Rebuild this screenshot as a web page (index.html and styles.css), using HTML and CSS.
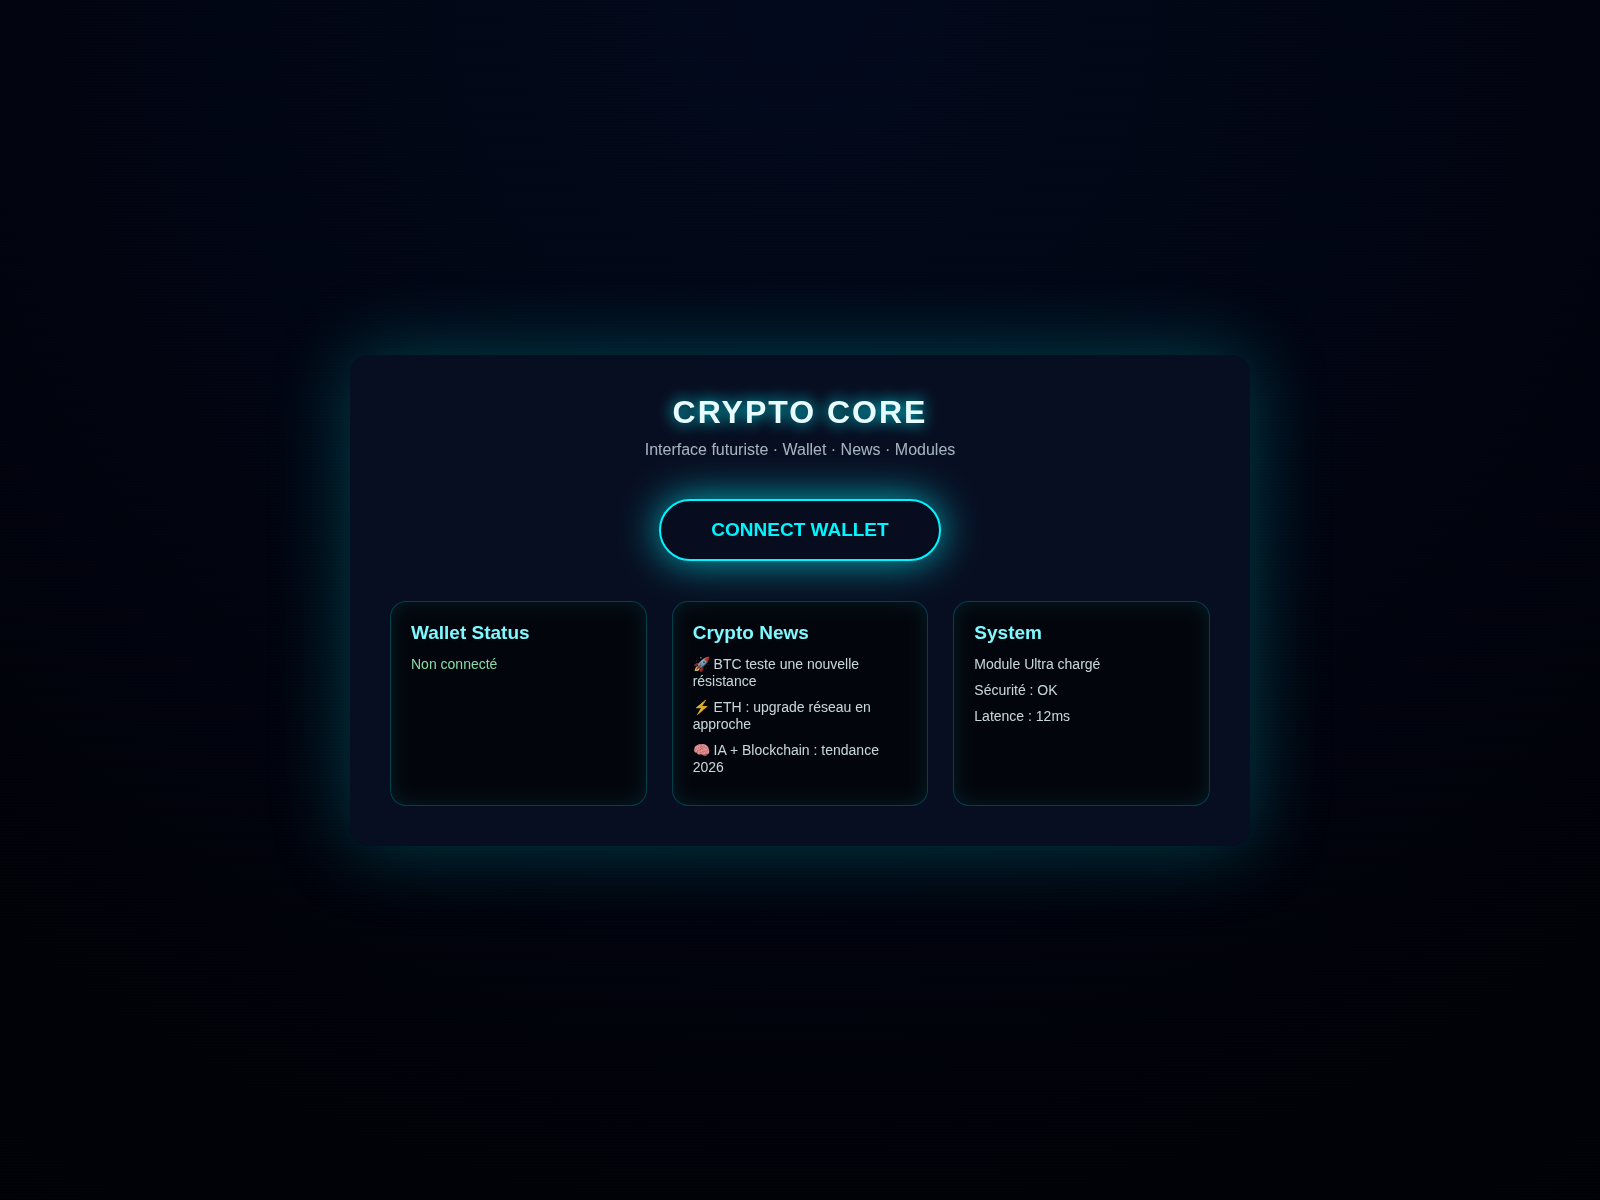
FILE: index.html
```html
<!DOCTYPE html>
<html lang="fr">
<head>
    <meta charset="UTF-8">
    <meta name="viewport" content="width=device-width, initial-scale=1.0">
    <title>Crypto Core</title>
    <link rel="stylesheet" href="styles.css">
</head>
<body>
    <main class="core">
        <header>
            <h1>CRYPTO CORE</h1>
            <p class="subtitle">Interface futuriste · Wallet · News · Modules</p>
        </header>

        <button id="connectBtn" class="connect" type="button">CONNECT WALLET</button>

        <div class="grid">
            <section class="card">
                <h3>Wallet Status</h3>
                <p id="status" class="status">Non connecté</p>
            </section>
            <section class="card">
                <h3>Crypto News</h3>
                <p>🚀 BTC teste une nouvelle résistance</p>
                <p>⚡ ETH : upgrade réseau en approche</p>
                <p>🧠 IA + Blockchain : tendance 2026</p>
            </section>
            <section class="card">
                <h3>System</h3>
                <p>Module Ultra chargé</p>
                <p>Sécurité : OK</p>
                <p>Latence : 12ms</p>
            </section>
        </div>
    </main>
</body>
</html>
```

FILE: styles.css
```css
* {
    box-sizing: border-box;
}
body {
    margin: 0;
    min-height: 100vh;
    display: flex;
    align-items: center;
    justify-content: center;
    background: radial-gradient(circle at top, #03091c, #01020b 70%, #010105);
    color: #e8fbff;
    font-family: "Liberation Sans", Arial, sans-serif;
}
/* scanlines */
body::before {
    content: "";
    position: fixed;
    inset: 0;
    background: repeating-linear-gradient(to bottom, rgba(0, 255, 255, 0.01) 0 1px, transparent 1px 3px);
    pointer-events: none;
}
.core {
    position: relative;
    width: 100%;
    max-width: 900px;
    padding: 40px;
    border-radius: 20px;
    background: rgba(9, 16, 35, 0.9);
    box-shadow: 0 0 80px rgba(0, 245, 255, 0.25);
    backdrop-filter: blur(10px);
    text-align: center;
}
h1 {
    margin: 0;
    font-size: 32px;
    line-height: 34px;
    letter-spacing: 2px;
    text-shadow: 0 0 15px #00f5ff;
}
.subtitle {
    margin: 12px 0 40px;
    font-size: 16px;
    line-height: 18px;
    opacity: 0.7;
}
.connect {
    padding: 18px 50px;
    border: 2px solid #00f5ff;
    border-radius: 40px;
    background: #070d1e;
    box-shadow: 0 0 40px rgba(0, 245, 255, 0.7);
    color: #00f5ff;
    font-family: inherit;
    font-size: 19px;
    font-weight: bold;
    line-height: 22px;
    cursor: pointer;
}
.grid {
    display: grid;
    grid-template-columns: repeat(3, 1fr);
    gap: 25px;
    margin-top: 40px;
    text-align: left;
}
.card {
    padding: 20px;
    border: 1px solid rgba(0, 245, 255, 0.25);
    border-radius: 16px;
    background: rgba(0, 0, 0, 0.6);
    box-shadow: inset 0 0 20px rgba(0, 245, 255, 0.1);
}
.card h3 {
    margin: 0 0 12px;
    font-size: 19px;
    line-height: 22px;
    color: #7df9ff;
}
.card p {
    margin: 0 0 9px;
    font-size: 14px;
    line-height: 17px;
    opacity: 0.85;
}
.card .status {
    color: #9dffc4;
}
```
